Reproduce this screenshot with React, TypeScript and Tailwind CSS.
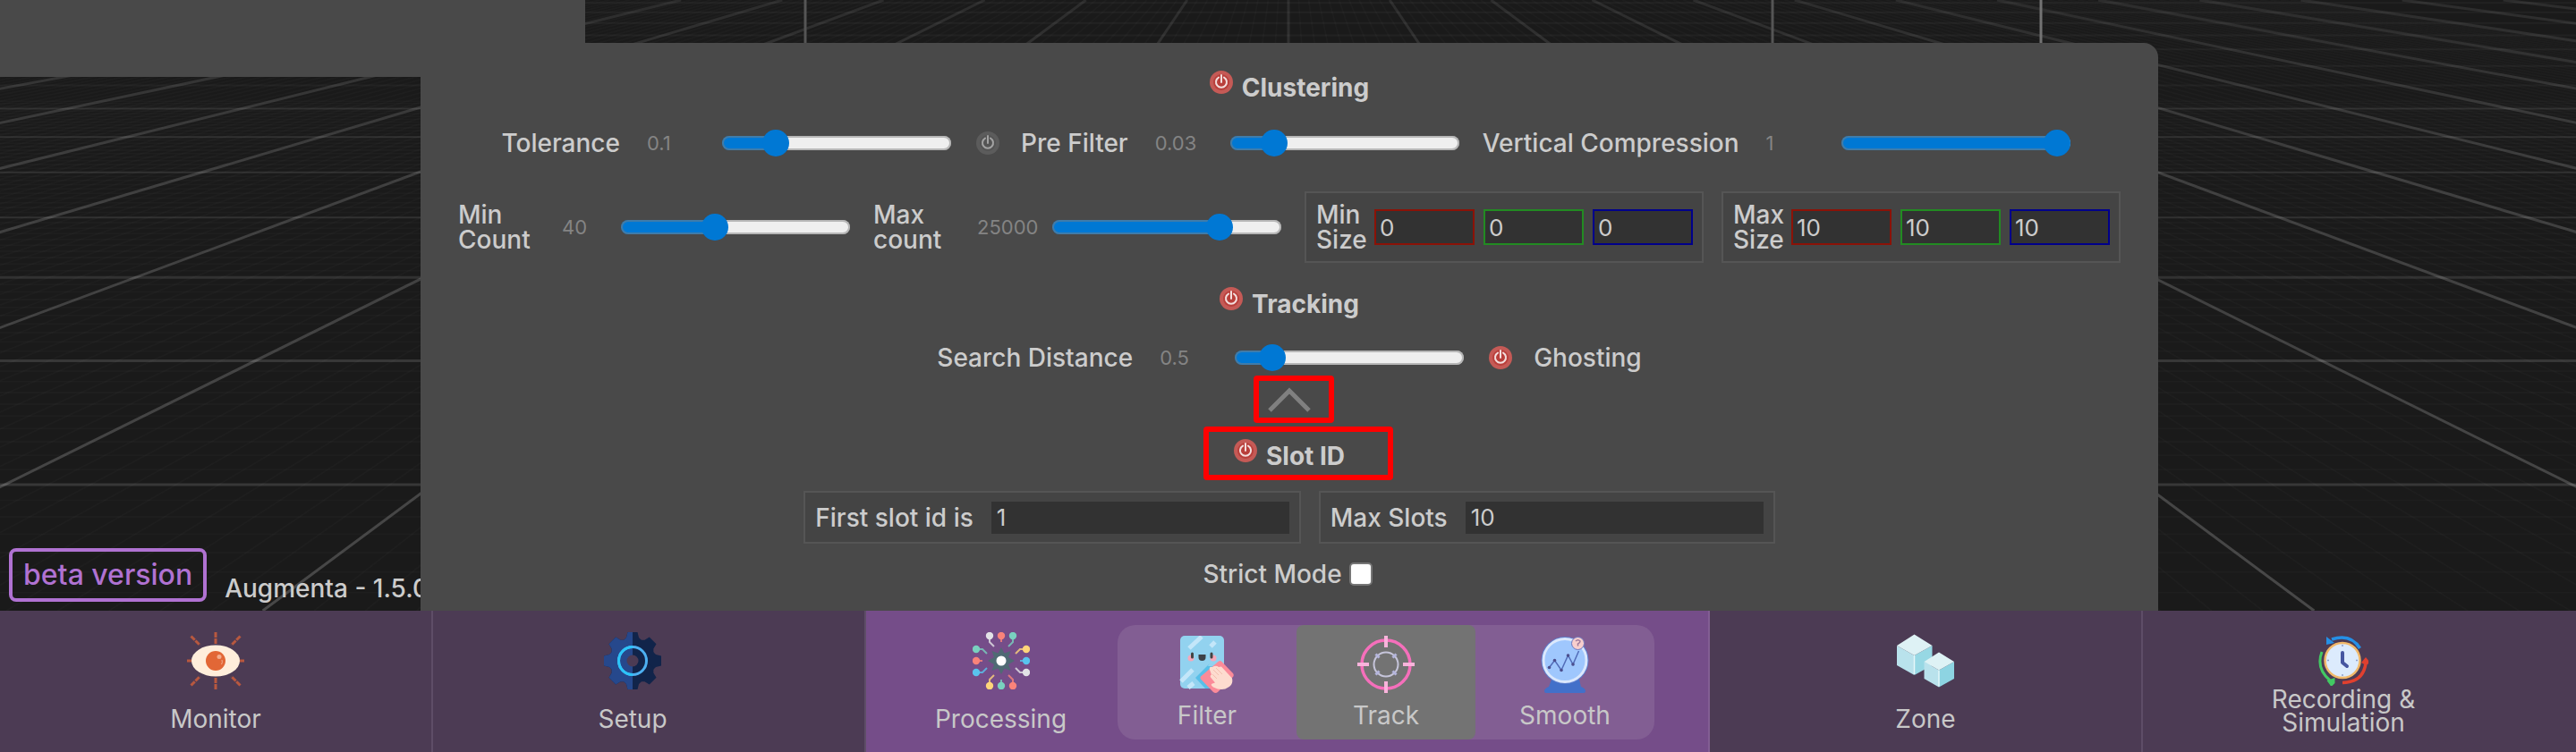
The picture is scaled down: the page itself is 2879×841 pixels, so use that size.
import React, { useState } from "react";

const HORIZON = 168;

// screen y of the ground line at depth k (k = 0 is the closest major line)
const rowY = (k: number) => 1 / (0.0014085 + 0.000341 * k) - HORIZON;

const Scene = () => {
  const majorRows = Array.from({ length: 14 }, (_, i) => i);
  const minorRows = Array.from({ length: 70 }, (_, i) => i / 10 - 0.6).filter(k => Math.abs(k - Math.round(k)) > 0.05);
  const majorCols = Array.from({ length: 33 }, (_, i) => i - 16);
  const minorCols = Array.from({ length: 201 }, (_, i) => i - 100).filter(n => n % 10 !== 0);

  return (
    <svg
      className="absolute inset-0 h-full w-full"
      viewBox="0 0 2879 683"
      preserveAspectRatio="xMidYMin slice"
      aria-hidden="true"
    >
      <defs>
        <linearGradient id="fade" x1="0" y1="0" x2="0" y2="683" gradientUnits="userSpaceOnUse">
          <stop offset="0" stopColor="#fff" stopOpacity="0.08" />
          <stop offset="0.3" stopColor="#fff" stopOpacity="0.16" />
          <stop offset="1" stopColor="#fff" stopOpacity="0.2" />
        </linearGradient>
      </defs>
      <rect width="2879" height="683" fill="#1a1a1a" />
      {minorRows.map(k => (
        <line key={k} x1="0" x2="2879" y1={rowY(k)} y2={rowY(k)} stroke="#fff" strokeOpacity="0.02" strokeWidth="2" />
      ))}
      {minorCols.map(n => (
        <line
          key={n}
          x1={1440 + n * 0.06735 * HORIZON}
          y1="0"
          x2={1440 + n * 0.06735 * (HORIZON + 683)}
          y2="683"
          stroke="#fff"
          strokeOpacity="0.02"
          strokeWidth="2"
        />
      ))}
      {majorRows.map(k => (
        <line
          key={k}
          x1="0"
          x2="2879"
          y1={rowY(k)}
          y2={rowY(k)}
          stroke="#fff"
          strokeOpacity={k < 2 ? 0.13 : k < 7 ? 0.1 : 0.04}
          strokeWidth={k < 3 ? 3 : 2}
        />
      ))}
      {majorCols.map(n => (
        <line
          key={n}
          x1={1440 + n * 0.6735 * HORIZON}
          y1="0"
          x2={1440 + n * 0.6735 * (HORIZON + 683) + 0.01}
          y2="683"
          stroke="url(#fade)"
          strokeWidth="3"
        />
      ))}
      <path d="M900 0V60M1981 0V60" stroke="#555" strokeWidth="3" />
      <path d="M2281 0V60" stroke="#737373" strokeWidth="3" />
    </svg>
  );
};

const PowerButton = ({ label, on = true }: { label: string; on?: boolean }) => {
  const [active, setActive] = useState(on);
  return (
    <button type="button" aria-label={label} aria-pressed={active} onClick={() => setActive(!active)} className="shrink-0">
      <svg viewBox="0 0 26 26" className="size-[26px]" fill="none">
        <circle cx="13" cy="13" r="13" fill={active ? "#c55a56" : "#5c5c5c"} />
        <circle cx="13" cy="13" r="9" fill={active ? "#b93f3b" : "#545454"} />
        <path
          d="M10 7.600A6 6 0 1 0 16 7.600M13 5V13"
          stroke={active ? "#f3dedd" : "#a3a3a3"}
          strokeWidth="2"
          strokeLinecap="round"
        />
      </svg>
    </button>
  );
};

interface SliderProps {
  label: string;
  value: string;
  percent: number;
  stacked?: boolean;
  compact?: boolean;
}

const Slider: React.FC<SliderProps> = ({ label, value, percent, stacked, compact }) => {
  const [position, setPosition] = useState(percent);
  const fill = `calc(15px + (100% - 30px) * ${position / 100})`;

  return (
    <label className="flex items-center">
      <span className={stacked ? "mr-[30px] w-[86px]" : "mr-[30px] whitespace-nowrap"}>{label}</span>
      <span className={`${compact ? "w-[66px]" : "w-[84px]"} text-[22px] font-normal text-[#848484]`}>{value}</span>
      <input
        type="range"
        min="0"
        max="100"
        value={position}
        onChange={(e) => setPosition(Number(e.target.value))}
        style={{ "--fill": fill } as React.CSSProperties}
        className="h-[30px] w-64 appearance-none bg-transparent [&::-webkit-slider-runnable-track]:h-4 [&::-webkit-slider-runnable-track]:rounded-full [&::-webkit-slider-runnable-track]:bg-[linear-gradient(to_right,#0078d4_var(--fill),#efefef_var(--fill))] [&::-webkit-slider-runnable-track]:shadow-[inset_0_0_0_2px_#80808080] [&::-webkit-slider-thumb]:-mt-[7px] [&::-webkit-slider-thumb]:size-[30px] [&::-webkit-slider-thumb]:appearance-none [&::-webkit-slider-thumb]:rounded-full [&::-webkit-slider-thumb]:bg-[#0078d4]"
      />
    </label>
  );
};

const axes = [
  { name: "X", border: "border-[#8b1207]" },
  { name: "Y", border: "border-[#228b22]" },
  { name: "Z", border: "border-[#00008b]" }
];

const VectorField = ({ label, value }: { label: string; value: string }) => (
  <div role="group" aria-label={label} className="flex h-20 items-center border-2 border-[#555] bg-[#444] pr-[10px] pl-[11px]">
    <span className="w-[65px]">{label}</span>
    <div className="flex gap-[10px]">
      {axes.map(axis => (
        <input
          key={axis.name}
          type="text"
          aria-label={`${label} ${axis.name}`}
          defaultValue={value}
          className={`h-10 w-28 border-2 bg-[#323232] px-1 text-[26px] font-normal ${axis.border}`}
        />
      ))}
    </div>
  </div>
);

const NumberField = ({ label, value }: { label: string; value: string }) => (
  <label className="flex h-[59px] items-center gap-5 border-2 border-[#555] bg-[#444] px-[11px]">
    {label}
    <input type="text" defaultValue={value} className="h-9 w-[333px] bg-[#323232] px-1.5 text-[26px] font-normal" />
  </label>
);

const SectionTitle = ({ children }: { children: string }) => (
  <div className="flex h-10 items-center justify-center gap-[10px]">
    <div className="flex pb-3">
      <PowerButton label={`Toggle ${children}`} />
    </div>
    <h2 className="font-bold">{children}</h2>
  </div>
);

const EyeIcon = () => (
  <svg viewBox="0 0 64 64" className="size-16">
    <g stroke="#b8583f" strokeWidth="3" strokeDasharray="6 1">
      <path d="M32 0V13M32 64V51M4.5 4.5 14.5 14.5M59.5 4.5 49.5 14.5M4.5 59.5 14.5 49.5M59.5 59.5 49.5 49.5M0 32H5M64 32H59" />
    </g>
    <ellipse cx="32" cy="32" rx="27" ry="17.5" fill="#ffeedb" />
    <circle cx="32" cy="32" r="11" fill="#e26736" />
    <circle cx="36" cy="27.500" r="2.500" fill="#f3ad8e" />
    <path d="M39 31q1 3-.5 5" stroke="#f3ad8e" fill="none" />
  </svg>
);

const GearIcon = () => (
  <svg viewBox="0 0 64 64" className="size-16">
    <defs>
      <clipPath id="gear-left">
        <rect width="32" height="64" />
      </clipPath>
      <g id="gear">
        <circle cx="32" cy="32" r="25" />
        {[0, 45, 90, 135, 180, 225, 270, 315].map(angle => (
          <path key={angle} d="M26.500 0h11l1.500 6 4 4v6H21v-6l4-4z" transform={`rotate(${angle} 32 32)`} />
        ))}
      </g>
    </defs>
    <use href="#gear" fill="#11244a" />
    <use href="#gear" fill="#26488c" clipPath="url(#gear-left)" />
    <circle cx="32" cy="32" r="15.500" fill="none" stroke="#4db0f2" strokeWidth="3" />
    <path d="M32 16.500a15.500 15.500 0 0 0 0 31" fill="none" stroke="#2cc4f8" strokeWidth="3" />
    <circle cx="32" cy="32" r="6.500" fill="#4c3b54" />
  </svg>
);

const branches = [
  { d: "M19 4v7l5 5", x: 19, y: 4, color: "#e2e2e6" },
  { d: "M32 4v7", x: 32, y: 4, color: "#f9837a" },
  { d: "M45 4v7l-5 5", x: 45, y: 4, color: "#79d1bf" },
  { d: "M4 19h7l5 5", x: 4, y: 19, color: "#79d1bf" },
  { d: "M4 32h7", x: 4, y: 32, color: "#f9837a" },
  { d: "M4 45h7l5-5", x: 4, y: 45, color: "#59c4ee" },
  { d: "M60 19h-7l-5 5", x: 60, y: 19, color: "#ffd57a" },
  { d: "M60 32h-7", x: 60, y: 32, color: "#59c4ee" },
  { d: "M60 45h-7l-5-5", x: 60, y: 45, color: "#e2e2e6" },
  { d: "M19 60v-7l5-5", x: 19, y: 60, color: "#ffd57a" },
  { d: "M32 60v-7", x: 32, y: 60, color: "#79d1bf" },
  { d: "M45 60v-7l-5-5", x: 45, y: 60, color: "#f9837a" }
];

const ProcessingIcon = () => (
  <svg viewBox="0 0 64 64" className="size-16">
    {branches.map(b => (
      <g key={b.d}>
        <path d={b.d} fill="none" stroke={b.color} strokeWidth="2" strokeOpacity="0.8" />
        <circle cx={b.x} cy={b.y} r="4.200" fill={b.color} />
      </g>
    ))}
    <path
      d="M32 17l3.500 6.500 7-2.500-2.500 7 7 4-7 4 2.500 7-7-2.500L32 47l-3.500-6.500-7 2.500 2.500-7-7-4 7-4-2.500-7 7 2.500z"
      fill="#4f6a74"
    />
    <circle cx="32" cy="32" r="5.500" fill="#fff" />
  </svg>
);

const FilterIcon = () => (
  <svg viewBox="0 0 64 64" className="size-16">
    <rect x="2" y="0" width="49" height="59" rx="5" fill="#92d2ef" />
    <path d="M12 14 26 1M36 12l5-5M3 51l13-13M11 58l6-5" stroke="#c3e6f9" strokeWidth="5" />
    <path d="M19 47 40 26l11 4v29H30z" fill="#58bfe8" />
    <path d="M40 20h11v14H33z" fill="#92d2ef" />
    <circle cx="14" cy="25" r="3.500" fill="#f5a9bb" />
    <circle cx="39" cy="25" r="3.500" fill="#f5a9bb" />
    <path d="M15.500 20v4M37 20v4" stroke="#444" strokeWidth="3" strokeLinecap="round" />
    <path d="M22.500 21h8v3a4 4 0 0 1-8 0z" fill="#3d4147" />
    <path d="M45 28.500q2-1 3.500.5L61 42q1.500 2 0 4L44 63q-2.500 2-5 0L25 48.500q-1-1.500 0-3z" fill="#fb8b99" />
    <path d="M35 38q-1-4 3-3l2-1q3-1 5 1l3-.5 12 13q1.500 7-4 10-7 5-17 0-4-3-1-4l3-1-5-6q-1-2 1-3z" fill="#fddccf" />
    <path d="M39 38l6 6M42 36l7 7M38 43l5 5" stroke="#f3bfae" />
  </svg>
);

const TargetIcon = () => (
  <svg viewBox="0 0 64 64" className="size-16" fill="none">
    <circle cx="32" cy="32" r="27" stroke="#f56fbb" strokeWidth="3.500" />
    <circle cx="32" cy="32" r="13.500" stroke="#c6c5db" strokeWidth="2" />
    <path d="M20.500 20.500l4 4M43.500 20.500l-4 4M20.500 43.500l4-4M43.500 43.500l-4-4" stroke="#b4b5dc" strokeWidth="3" />
    <path d="M32 0v13M32 51v13M0 32h13M51 32h13" stroke="#f9b3db" strokeWidth="4" />
  </svg>
);

const CrystalBallIcon = () => (
  <svg viewBox="0 0 64 64" className="size-16">
    <path d="M17 49h31l2 8q5 2 5 5 0 2-2 2H11q-2 0-2-2 0-3 5-5z" fill="#4270c9" />
    <circle cx="32" cy="27.500" r="26.500" fill="#5d7fcf" />
    <circle cx="32" cy="27.500" r="24" fill="#9fc7fd" stroke="#dbe8fc" strokeWidth="3" />
    <path d="M14.500 35.500 20.500 27.500 28 38.500 35.500 22 41 32 47.500 17" fill="none" stroke="#526cb8" strokeWidth="1.500" />
    <g fill="#4c4e8d">
      <circle cx="14.500" cy="35.500" r="1.800" />
      <circle cx="20.500" cy="27.500" r="1.800" />
      <circle cx="28" cy="38.500" r="1.800" />
      <circle cx="35.500" cy="22" r="1.800" />
      <circle cx="41" cy="32" r="1.800" />
    </g>
    <circle cx="46.500" cy="8.500" r="7" fill="#f8cfcd" stroke="#6d78c0" />
    <path d="M44 6q2.500-2.500 5 0 0 2-2.500 3v2.500" fill="none" stroke="#a07a9c" strokeWidth="1.500" />
  </svg>
);

const CubesIcon = () => (
  <svg viewBox="0 0 64 64" className="size-16">
    <path d="M0 15 19.500 26V48L0 37z" fill="#b9e2ec" />
    <path d="M39.500 15 19.500 26V48l20-11z" fill="#97d8e4" />
    <path d="M19.500 2.500 39.500 15l-20 11L0 15z" fill="#def2f5" />
    <path d="M19.500 26V47" stroke="#e6f7fa" strokeWidth="1.500" />
    <path d="M30.500 33 47 42.500V61.500L30.500 52z" fill="#b9e2ec" />
    <path d="M64 33 47 42.500V61.500L64 52z" fill="#8dd4e2" />
    <path d="M47 22.500 64 33 47 42.500 30.500 33z" fill="#def2f5" />
    <path d="M47 42.500V60.500" stroke="#e6f7fa" strokeWidth="1.500" />
  </svg>
);

const ClockIcon = () => (
  <svg viewBox="0 0 56 56" className="size-14" fill="none">
    <path d="M46.500 14Q36-3 15 4" stroke="#2590e6" strokeWidth="3.500" />
    <path d="M9 1v9l9-2z" fill="#2590e6" />
    <path d="M4 18Q-3 36 13 50" stroke="#42c963" strokeWidth="3" />
    <path d="M9.500 50l9-3 0 6-4 4z" fill="#42c963" />
    <path d="M27 52.500Q50 52 53 31" stroke="#e0402f" strokeWidth="3.500" />
    <path d="M48 30l5-6 5 6-5 3z" fill="#e0402f" />
    <circle cx="27" cy="27.500" r="19.500" fill="#dcebfd" stroke="#f1b869" strokeWidth="2.500" />
    <path d="M27 10v2M27 43v2M10 27.500h2M42 27.500h2" stroke="#8fa0cc" strokeWidth="1.500" />
    <path d="M27 19v11l5 4" stroke="#4656a0" strokeWidth="4" strokeLinecap="round" strokeLinejoin="round" />
  </svg>
);

const NavItem = ({ label, icon, className = "" }: { label: string; icon: React.ReactNode; className?: string }) => (
  <button
    type="button"
    className={`flex flex-col items-center gap-5 border-r-2 border-[#5e4d67] pt-6 leading-[26px] ${className}`}
  >
    {icon}
    {label}
  </button>
);

const SubItem = ({ label, icon, active }: { label: string; icon: React.ReactNode; active?: boolean }) => (
  <button
    type="button"
    className={`flex w-[200px] flex-col items-center gap-3 pt-3 ${active ? "rounded-lg bg-[#737373]" : ""}`}
  >
    {icon}
    {label}
  </button>
);

export default function App() {
  const [strict, setStrict] = useState(false);

  return (
    <div className="flex min-h-screen flex-col bg-[#1a1a1a] font-['Inter',sans-serif] text-[28px] leading-7 text-[#ccc]">
      <main className="relative flex flex-1 overflow-hidden font-medium">
        <Scene />

        <div className="relative flex w-[470px] shrink-0 flex-col justify-between">
          <div className="h-[86px] w-[654px] bg-[#494949]" />
          <div className="flex items-end gap-5 overflow-hidden pb-[10px] pl-[10px] whitespace-nowrap">
            <span className="flex h-[60px] shrink-0 items-center rounded-lg border-4 border-[#b072d2] px-3 text-[32px] text-[#b072d2]">
              beta version
            </span>
            <span className="pb-px">Augmenta - 1.5.0</span>
          </div>
        </div>

        <section className="relative mt-12 mr-[467px] flex flex-1 flex-col items-center rounded-tr-2xl bg-[#494949] pt-[30px] pb-[18px]">
          <SectionTitle>Clustering</SectionTitle>
          <div className="mt-3 mr-2 flex h-15 items-center">
            <Slider label="Tolerance" value="0.1" percent={20} />
            <div className="mr-6 ml-7 flex">
              <PowerButton label="Toggle Pre Filter" on={false} />
            </div>
            <div className="flex gap-[26px]">
              <Slider label="Pre Filter" value="0.03" percent={15} />
              <Slider label="Vertical Compression" value="1" percent={100} />
            </div>
          </div>
          <div className="mt-6 flex items-center gap-[26px]">
            <Slider label="Min Count" value="40" percent={40} stacked compact />
            <Slider label="Max count" value="25000" percent={76} stacked />
            <div className="flex gap-5">
              <VectorField label="Min Size" value="0" />
              <VectorField label="Max Size" value="10" />
            </div>
          </div>

          <div className="mt-[26px]">
            <SectionTitle>Tracking</SectionTitle>
          </div>
          <div className="mt-5 flex h-10 items-center">
            <Slider label="Search Distance" value="0.5" percent={12} />
            <div className="mr-6 ml-7 flex">
              <PowerButton label="Toggle Ghosting" />
            </div>
            <span>Ghosting</span>
          </div>

          <button
            type="button"
            aria-label="Collapse"
            className="ml-[10px] flex h-[53px] w-[90px] items-center justify-center rounded-sm border-6 border-[#f00] pr-[10px]"
          >
            <svg viewBox="0 0 48 28" className="h-7 w-12" fill="none">
              <path d="M2 26 24 4l22 22" stroke="#808080" strokeWidth="5" />
            </svg>
          </button>
          <div className="mt-1 ml-5 flex h-[60px] w-[212px] items-center justify-center rounded-sm border-6 border-[#f00] pt-1.5 pr-5">
            <SectionTitle>Slot ID</SectionTitle>
          </div>
          <div className="mt-3 flex gap-5">
            <NumberField label="First slot id is" value="1" />
            <NumberField label="Max Slots" value="10" />
          </div>
          <label className="mt-[14px] mr-1 flex h-10 items-center gap-2">
            Strict Mode
            <input
              type="checkbox"
              checked={strict}
              onChange={(e) => setStrict(e.target.checked)}
              className="size-[26px] appearance-none rounded-[5px] border-2 border-[#767676] bg-white checked:bg-[#0078d4]"
            />
          </label>
        </section>
      </main>

      <nav className="relative grid h-[158px] grid-cols-[1fr_1fr_943px_1fr_1fr] bg-[#4c3b54] leading-[26px] text-[#c8c8c8]">
        <NavItem label="Monitor" icon={<EyeIcon />} />
        <NavItem label="Setup" icon={<GearIcon />} className="pr-9" />
        <div className="flex items-start border-r-2 border-[#825e93] bg-[#754d89]">
          <button type="button" className="flex flex-1 flex-col items-center gap-5 pt-6 pl-5">
            <ProcessingIcon />
            Processing
          </button>
          <div className="mt-4 mr-[60px] flex h-32 rounded-[20px] bg-[#825e93]">
            <SubItem label="Filter" icon={<FilterIcon />} />
            <SubItem label="Track" icon={<TargetIcon />} active />
            <SubItem label="Smooth" icon={<CrystalBallIcon />} />
          </div>
        </div>
        <NavItem label="Zone" icon={<CubesIcon />} />
        <button type="button" className="flex flex-col items-center gap-0.5 pt-7 pr-9">
          <ClockIcon />
          <span className="w-44">Recording &amp; Simulation</span>
        </button>
      </nav>
    </div>
  );
}
